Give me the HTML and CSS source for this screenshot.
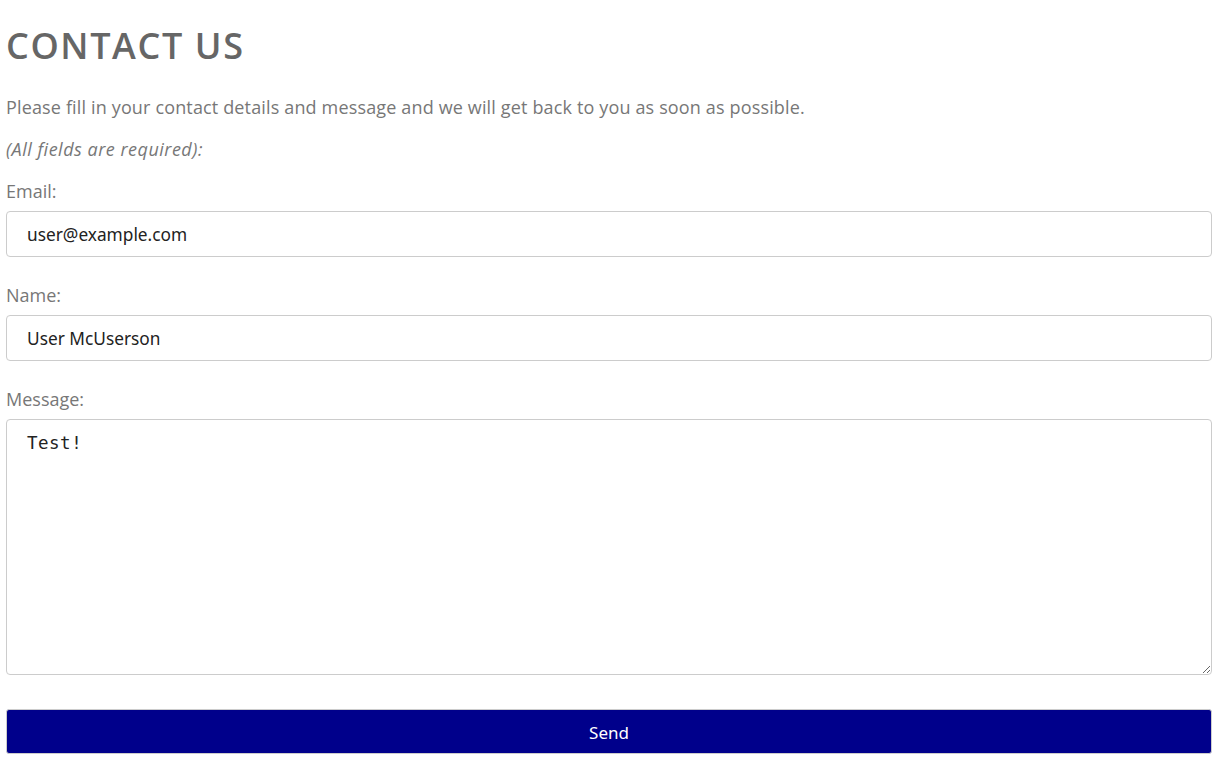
FILE: index.html
```html
<!DOCTYPE html>
<html lang="en">
<head>
<meta charset="utf-8">
<title>Contact Us</title>
<link rel="stylesheet" href="styles.css">
</head>
<body>
<main class="page">
  <h1 class="title">CONTACT US</h1>
  <p class="intro">Please fill in your contact details and message and we will get back to you as soon as possible.</p>
  <p class="note">(All fields are required):</p>
  <form class="form">
    <label class="field">
      <span class="label">Email:</span>
      <input class="input" type="email" value="user@example.com">
    </label>
    <label class="field">
      <span class="label">Name:</span>
      <input class="input" type="text" value="User McUserson">
    </label>
    <label class="field">
      <span class="label">Message:</span>
      <textarea class="textarea">Test!</textarea>
    </label>
    <button class="send" type="button">Send</button>
  </form>
</main>
</body>
</html>
```

FILE: styles.css
```css
* { box-sizing: border-box; }
html, body { margin: 0; padding: 0; background: #fff; }
body {
  font-family: "Open Sans", "Liberation Sans", sans-serif;
  color: #777;
}
.page {
  padding: 0 4px 0 6px;
}
.title {
  margin: 0;
  padding-top: 24px;
  font-size: 36px;
  line-height: 44px;
  letter-spacing: 1.6px;
  font-weight: 600;
  color: #666;
}
.intro, .note {
  margin: 0;
  font-size: 18px;
  line-height: 24px;
}
.intro { margin-top: 27px; letter-spacing: 0.15px; }
.note { margin-top: 18px; font-style: italic; letter-spacing: 0.5px; }
.form {
  display: flex;
  flex-direction: column;
  margin-top: 18px;
}
.field {
  display: flex;
  flex-direction: column;
  margin-bottom: 26px;
}
.label {
  font-size: 18px;
  line-height: 24px;
  margin-bottom: 8px;
}
.input, .textarea {
  width: 100%;
  border: 1px solid #ccc;
  border-radius: 4px;
  background: #fff;
  color: #222;
  padding: 0 20px;
  outline: none;
}
.input {
  height: 46px;
  font-family: "Noto Sans", "Open Sans", sans-serif;
  font-size: 17.3px;
}
.textarea {
  height: 256px;
  padding-top: 13px;
  font-family: "DejaVu Sans Mono", monospace;
  font-size: 17.5px;
  letter-spacing: 0.5px;
  resize: vertical;
}
.send {
  margin-top: 8px;
  height: 45px;
  width: 100%;
  border: 1px solid #ccc;
  border-radius: 3px;
  background: #00008b;
  color: #fff;
  font-family: "Noto Sans", "Open Sans", sans-serif;
  font-size: 17px;
  padding-top: 2px;
}
```
